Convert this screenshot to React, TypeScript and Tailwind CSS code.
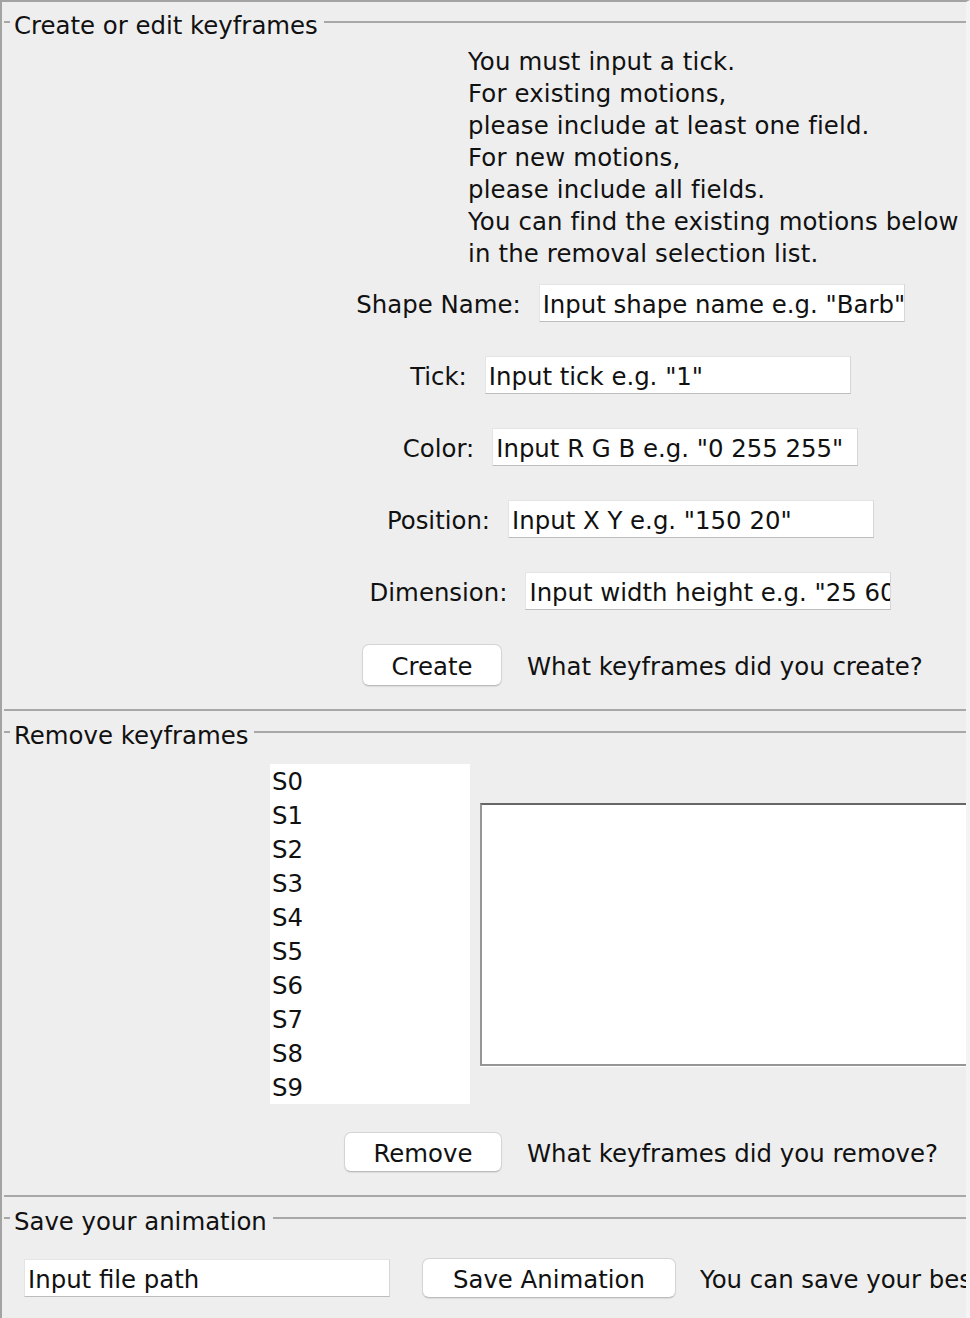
import React from 'react';

const FONT = { fontFamily: '"DejaVu Sans", "Liberation Sans", sans-serif' };

const instructions = [
  'You must input a tick.',
  'For existing motions,',
  'please include at least one field.',
  'For new motions,',
  'please include all fields.',
  'You can find the existing motions below',
  'in the removal selection list.',
];

const fields = [
  { label: 'Shape Name:', hint: 'Input shape name e.g. "Barb"' },
  { label: 'Tick:', hint: 'Input tick e.g. "1"' },
  { label: 'Color:', hint: 'Input R G B e.g. "0 255 255"' },
  { label: 'Position:', hint: 'Input X Y e.g. "150 20"' },
  { label: 'Dimension:', hint: 'Input width height e.g. "25 60"' },
];

const shapes = ['S0', 'S1', 'S2', 'S3', 'S4', 'S5', 'S6', 'S7', 'S8', 'S9'];

// titled border header: short dash, caption, long rule
function Title({ text, top }: { text: string; top: string }) {
  return (
    <div className={`flex items-start h-[28px] ${top}`}>
      <div className="w-[6px] h-[2px] mt-[11px] bg-[#a8a8a8]" />
      <div className="pl-[4px] pr-[6px] mt-[2px] leading-[28px] whitespace-nowrap">{text}</div>
      <div className="flex-1 h-[2px] mt-[11px] bg-[#a8a8a8]" />
    </div>
  );
}

function TextField({ hint, width }: { hint: string; width: string }) {
  return (
    <div
      className={`${width} h-[38px] shrink-0 bg-white border border-[#e4e4e4] border-b-[#bdbdbd] border-r-[#d6d6d6] pl-[3px] leading-[40px] whitespace-nowrap overflow-hidden`}
    >
      {hint}
    </div>
  );
}

function Button({ label, width, height }: { label: string; width: string; height: string }) {
  return (
    <div
      className={`${width} ${height} shrink-0 flex items-center justify-center pt-[4px] leading-[28px] bg-white rounded-[7px] border border-[#d4d4d4] border-b-[#bcbcbc] shadow-[0_1px_1px_rgba(0,0,0,0.08)] whitespace-nowrap`}
    >
      {label}
    </div>
  );
}

export default function App() {
  return (
    <div
      style={FONT}
      className="w-[970px] h-[1318px] overflow-hidden bg-[#eeeeee] text-[#111] text-[24.4px] border-l-2 border-t-2 border-r-4 border-l-[#a3a3a3] border-t-[#a3a3a3] border-r-[#f4f4f4] flex flex-col"
    >
      {/* Create or edit keyframes */}
      <div className="ml-[2px] h-[707px] shrink-0 flex flex-col">
        <Title text="Create or edit keyframes" top="mt-[8px]" />

        <div className="ml-[464px] mt-[8px] flex flex-col whitespace-nowrap tracking-[0.15px]">
          {instructions.map((line) => (
            <div key={line} className="h-[32px] leading-[32px]">
              {line}
            </div>
          ))}
        </div>

        <div className="ml-[287px] w-[679px] mt-[14px] flex flex-col gap-[34px]">
          {fields.map((f) => (
            <div key={f.label} className="h-[38px] flex items-center justify-center gap-[18px]">
              <span className="whitespace-nowrap leading-[28px] mt-[4px]">{f.label}</span>
              <TextField hint={f.hint} width="w-[366px]" />
            </div>
          ))}
        </div>

        <div className="ml-[358px] mt-[34px] h-[42px] flex items-center gap-[25px]">
          <Button label="Create" width="w-[140px]" height="h-[42px]" />
          <span className="whitespace-nowrap leading-[28px] mt-[4px]">What keyframes did you create?</span>
        </div>
      </div>

      {/* Remove keyframes */}
      <div className="ml-[2px] h-[486px] shrink-0 border-t-2 border-[#a8a8a8] flex flex-col">
        <Title text="Remove keyframes" top="mt-[9px]" />

        <div className="mt-[16px] flex items-center">
          <div className="ml-[266px] w-[200px] bg-white flex flex-col shrink-0">
            {shapes.map((s) => (
              <div key={s} className="h-[34px] leading-[36px] pl-[2px]">
                {s}
              </div>
            ))}
          </div>
          <div className="ml-[10px] w-[520px] h-[263px] shrink-0 bg-white border-2 border-[#969696] border-t-[#666666] border-r-0 shadow-[0_1px_0_#ffffff]" />
        </div>

        <div className="ml-[340px] mt-[28px] h-[40px] flex items-center gap-[25px]">
          <Button label="Remove" width="w-[158px]" height="h-[40px]" />
          <span className="whitespace-nowrap leading-[28px] mt-[4px]">What keyframes did you remove?</span>
        </div>
      </div>

      {/* Save your animation */}
      <div className="ml-[2px] flex-1 border-t-2 border-[#a8a8a8] flex flex-col">
        <Title text="Save your animation" top="mt-[9px]" />

        <div className="mt-[24px] ml-[20px] h-[40px] flex items-center">
          <TextField hint="Input file path" width="w-[366px]" />
          <div className="ml-[32px]">
            <Button label="Save Animation" width="w-[254px]" height="h-[40px]" />
          </div>
          <span className="ml-[24px] leading-[28px] mt-[4px] whitespace-nowrap">You can save your best animation here.</span>
        </div>
      </div>
    </div>
  );
}
